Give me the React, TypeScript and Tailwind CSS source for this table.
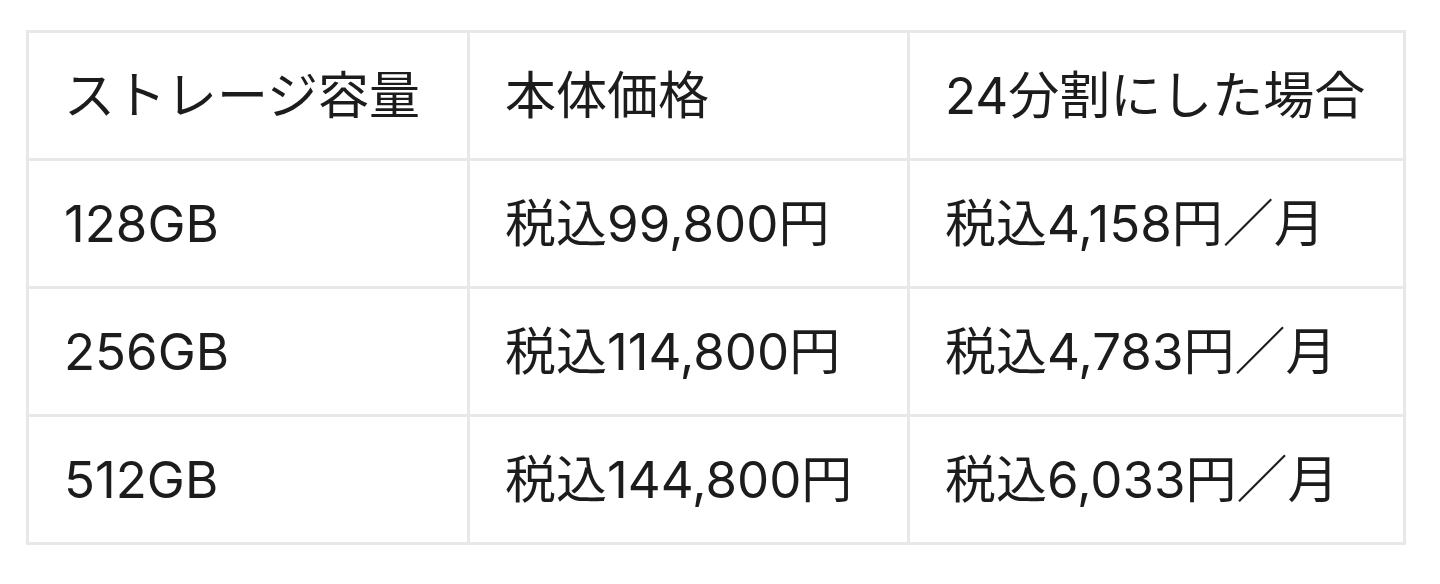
import React from 'react';

const rows = [
  ['128GB', '税込99,800円', '税込4,158円／月'],
  ['256GB', '税込114,800円', '税込4,783円／月'],
  ['512GB', '税込144,800円', '税込6,033円／月'],
];

const cell = 'border-[3px] border-[#e8e8e8] px-[35px] h-[128px] align-middle text-left font-normal';

const App: React.FC = () => {
  return (
    <div
      className="w-[1440px] h-[584px] bg-white pt-[30px] pl-[26px] text-[#1c1c1c] text-[51px] leading-none"
      style={{ fontFamily: 'Inter, "Noto Sans CJK JP", sans-serif' }}
    >
      <table className="table-fixed border-collapse w-[1377px]">
        <colgroup>
          <col className="w-[441px]" />
          <col className="w-[440px]" />
          <col className="w-[496px]" />
        </colgroup>
        <thead>
          <tr>
            <th className={cell}>ストレージ容量</th>
            <th className={cell}>本体価格</th>
            <th className={cell}>24分割にした場合</th>
          </tr>
        </thead>
        <tbody>
          {rows.map((r) => (
            <tr key={r[0]}>
              {r.map((c, i) => (
                <td key={i} className={cell}>
                  {c}
                </td>
              ))}
            </tr>
          ))}
        </tbody>
      </table>
    </div>
  );
};

export default App;
